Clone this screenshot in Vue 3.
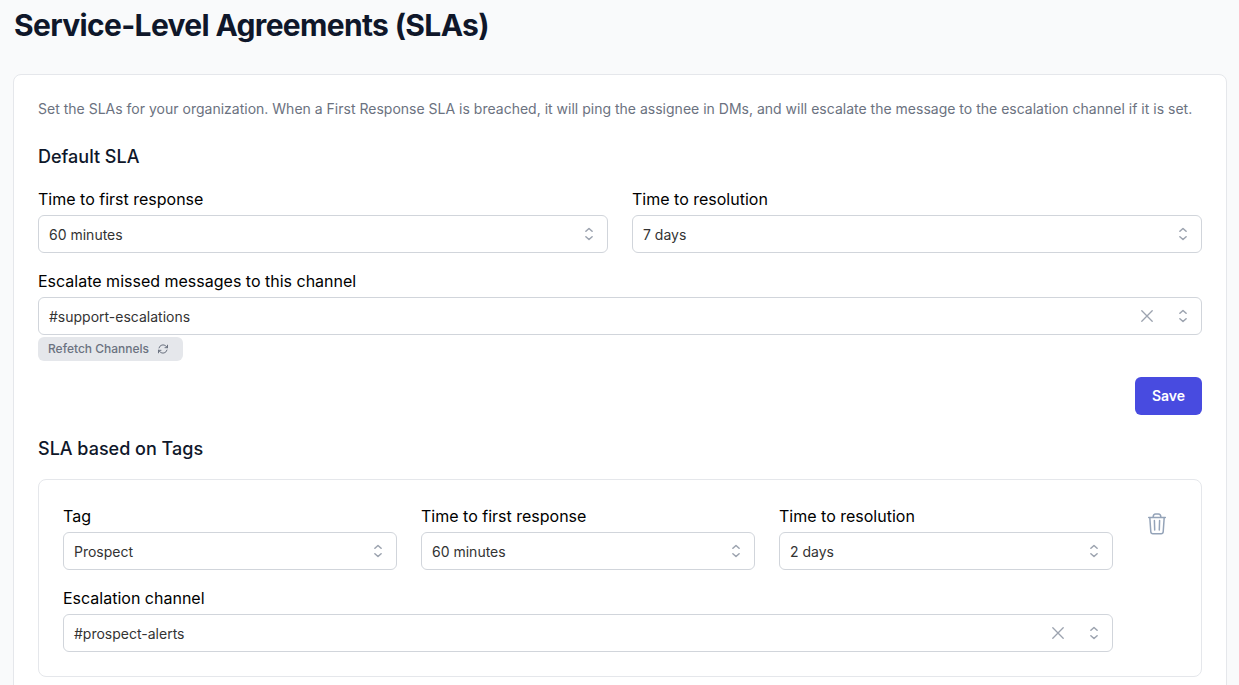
<script setup>
import { h } from 'vue'

const defaults = [
  { label: 'Time to first response', value: '60 minutes' },
  { label: 'Time to resolution', value: '7 days' },
]
const tagFields = [
  { label: 'Tag', value: 'Prospect' },
  { label: 'Time to first response', value: '60 minutes' },
  { label: 'Time to resolution', value: '2 days' },
]

const stroke = { fill: 'none', stroke: 'currentColor', 'stroke-linecap': 'round', 'stroke-linejoin': 'round' }

const Field = (props) =>
  h('div', { class: 'field' }, [
    h('label', { class: 'label' }, props.label),
    h('div', { class: 'select' }, [
      h('span', { class: 'value' }, props.value),
      props.clearable
        ? h('svg', { class: 'clear', width: 12, height: 12, viewBox: '0 0 12 12', ...stroke, 'stroke-width': 1.3 }, [
            h('path', { d: 'M.8.8 11.2 11.2M11.2.8.8 11.2' }),
          ])
        : null,
      h('svg', { class: 'sort', width: 8, height: 14, viewBox: '0 0 8 14', ...stroke, 'stroke-width': 1.5 }, [
        h('path', { d: 'M.9 4.3 4 1.5 7.1 4.3M.9 9.7 4 12.5 7.1 9.7' }),
      ]),
    ]),
  ])
Field.props = { label: String, value: String, clearable: Boolean }
</script>

<template>
  <main class="page">
    <h1>Service-Level Agreements (SLAs)</h1>
    <section class="card">
      <p class="desc">Set the SLAs for your organization. When a First Response SLA is breached, it will ping the assignee in DMs, and will escalate the message to the escalation channel if it is set.</p>
      <h2>Default SLA</h2>
      <div class="row two">
        <Field v-for="f in defaults" :key="f.label" v-bind="f" />
      </div>
      <Field label="Escalate missed messages to this channel" value="#support-escalations" clearable />
      <button class="refetch">
        <span>Refetch Channels</span>
        <svg width="12" height="12" viewBox="0 0 24 24" fill="none" stroke="currentColor" stroke-width="2" stroke-linecap="round" stroke-linejoin="round">
          <path d="M16.023 9.348h4.992v-.001M2.985 19.644v-4.992m0 0h4.992m-4.993 0 3.181 3.183a8.25 8.25 0 0 0 13.803-3.7M4.031 9.865a8.25 8.25 0 0 1 13.803-3.7l3.181 3.182m0-4.991v4.99" />
        </svg>
      </button>
      <div class="actions"><button class="save">Save</button></div>
      <h2 class="tags-title">SLA based on Tags</h2>
      <div class="tag-card">
        <div class="tag-fields">
          <div class="row three">
            <Field v-for="f in tagFields" :key="f.label" v-bind="f" />
          </div>
          <Field label="Escalation channel" value="#prospect-alerts" clearable />
        </div>
        <button class="trash" aria-label="Delete">
          <svg width="20" height="24" viewBox="0 0 20 24" fill="none" stroke="currentColor" stroke-width="1.5" stroke-linecap="round" stroke-linejoin="round">
            <path d="M1.7 5.5h16.6M2.8 5.5l1 14.2c.1 1.2.9 2 2.1 2h8.2c1.2 0 2-.8 2.1-2l1-14.2M6.1 5.3c.1-2 .9-3.2 2.5-3.2h2.8c1.6 0 2.4 1.2 2.5 3.2M7.4 8.6l.3 9.4M12.6 8.6l-.3 9.4" />
          </svg>
        </button>
      </div>
    </section>
  </main>
</template>

<style>
html, body { background: #f9fafb; overflow: hidden; }
</style>

<style scoped>
.page, .page :deep(*) { box-sizing: border-box; }
.page {
  height: 685px;
  overflow: hidden;
  padding: 7px 12px 0 13px;
  font-family: Inter, "Liberation Sans", sans-serif;
  color: #000;
}
button { font-family: inherit; border: 0; padding: 0; }
h1 {
  margin: 0 0 31px 1px;
  font-size: 30px;
  line-height: 36px;
  font-weight: 700;
  letter-spacing: -0.66px;
  color: #0f172a;
}
.card {
  height: 720px;
  padding: 24px;
  background: #fff;
  border: 1px solid #e5e7eb;
  border-radius: 8px;
}
.desc { margin: 0 0 24px; font-size: 14px; line-height: 20px; letter-spacing: 0.006px; color: #6b7280; white-space: nowrap; }
h2 { margin: 0 0 16px; font-size: 18px; line-height: 28px; font-weight: 500; color: #0f172a; }
.row { display: grid; gap: 24px; margin-bottom: 16px; }
.two { grid-template-columns: 1fr 1fr; }
.three { grid-template-columns: repeat(3, 1fr); }
:deep(.label) { display: block; font-size: 16px; line-height: 24px; margin-bottom: 4px; }
:deep(.select) {
  display: flex;
  align-items: center;
  height: 38px;
  padding: 0 14px 0 10px;
  border: 1px solid #d1d5db;
  border-radius: 6px;
  background: #fff;
  color: #9ca3af;
}
:deep(.value) { flex: 1; padding-top: 2px; font-size: 14px; line-height: 20px; color: #333; }
:deep(.clear) { margin-right: 26px; }
.refetch {
  display: flex;
  align-items: center;
  gap: 8px;
  width: 145px;
  height: 24px;
  margin-top: 2px;
  padding: 0 0 1px 10px;
  border-radius: 6px;
  background: #e5e7eb;
  color: #6b7280;
  font-size: 12px;
  font-weight: 500;
}
.actions { display: flex; justify-content: flex-end; margin-top: 16px; }
.save {
  width: 67px;
  height: 38px;
  padding-bottom: 1px;
  border-radius: 6px;
  background: #484be0;
  color: #fff;
  font-size: 14px;
  font-weight: 600;
}
.tags-title { margin-top: 20px; margin-bottom: 16px; }
.tag-card {
  display: flex;
  align-items: flex-start;
  height: 198px;
  padding: 24px;
  border: 1px solid #e5e7eb;
  border-radius: 8px;
}
.tag-fields { width: 1050px; }
.trash { display: flex; margin: 8px 0 0 34px; background: none; color: #94a3b8; }
</style>
